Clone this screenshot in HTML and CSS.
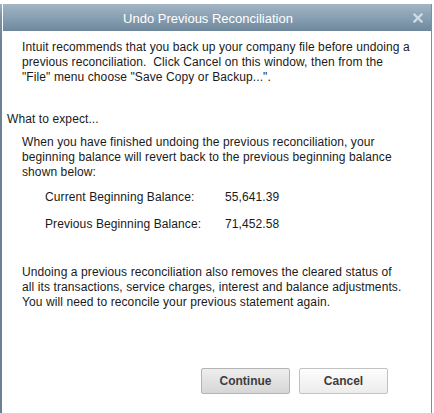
FILE: index.html
```html
<!DOCTYPE html>
<html lang="en">
<head>
  <meta charset="UTF-8" />
  <title>Undo Previous Reconciliation</title>
  <meta name="viewport" content="width=device-width, initial-scale=1.0">
  <link rel="stylesheet" href="styles.css">
</head>
<body>
  <div class="screen">
    <div class="backdrop"></div>
    <div class="dialog">
      <div class="titlebar">
        <span class="title">Undo Previous Reconciliation</span>
        <button class="close" title="Close">
          <svg width="10" height="10" viewBox="0 0 10 10">
            <path d="M1.5 1.5L8.5 8.5M8.5 1.5L1.5 8.5" stroke="currentColor" stroke-width="2.3" stroke-linecap="square" />
          </svg>
        </button>
      </div>

      <div class="content">
        <p class="note">
          Intuit recommends that you back up your company file before undoing a<br>
          previous reconciliation.&nbsp; Click Cancel on this window, then from the<br>
          "File" menu choose "Save Copy or Backup...".
        </p>

        <p class="heading">What to expect...</p>

        <p class="note explain">
          When you have finished undoing the previous reconciliation, your<br>
          beginning balance will revert back to the previous beginning balance<br>
          shown below:
        </p>

        <div class="balances">
          <div class="row">
            <span class="label">Current Beginning Balance:</span>
            <span class="value">55,641.39</span>
          </div>
          <div class="row">
            <span class="label">Previous Beginning Balance:</span>
            <span class="value">71,452.58</span>
          </div>
        </div>

        <p class="note warning">
          Undoing a previous reconciliation also removes the cleared status of<br>
          all its transactions, service charges, interest and balance adjustments.<br>
          You will need to reconcile your previous statement again.
        </p>

        <div class="actions">
          <button class="btn primary">Continue</button>
          <button class="btn">Cancel</button>
        </div>
      </div>
    </div>
  </div>
</body>
</html>
```

FILE: styles.css
```css
body {
  margin: 0;
  padding: 0;
  background-color: #ffffff;
  font-family: "Liberation Sans", Arial, sans-serif;
  font-size: 12px;
  color: #1a1a1a;
}

.screen {
  display: flex;
  height: 413px;
  overflow: hidden;
}

.backdrop {
  width: 2px;
  margin-top: 4px;
  background: linear-gradient(#9fb2c2 0, #7d93a6 12px, #6c8193 40px, #6c8193 100%);
}

.dialog {
  width: 428px;
  margin-top: 4px;
  margin-left: 1px;
  border-right: 1px solid #7890a4;
  display: flex;
  flex-direction: column;
  background-color: #ffffff;
}

.titlebar {
  height: 27px;
  display: flex;
  align-items: center;
  padding-right: 28px;
  background: linear-gradient(#a2b5c5, #88a0b3 50%, #6f889c);
  color: #ffffff;
}

.title {
  flex: 1;
  text-align: center;
  font-size: 13px;
  padding-top: 1px;
}

.close {
  border: none;
  background: none;
  padding: 0;
  margin-right: -20px;
  margin-top: 1px;
  width: 10px;
  height: 10px;
  color: #d3dbe2;
  display: flex;
  cursor: pointer;
}

.content {
  padding: 9px 0 0 0;
  display: flex;
  flex-direction: column;
  letter-spacing: 0.1px;
}

p {
  margin: 0;
  line-height: 15px;
  white-space: nowrap;
}

.note {
  padding-left: 19px;
}

.heading {
  margin-top: 27px;
  padding-left: 4px;
}

.explain {
  margin-top: 8px;
}

.balances {
  margin-top: 10px;
  padding-left: 42px;
  display: flex;
  flex-direction: column;
  gap: 12px;
}

.row {
  display: flex;
  line-height: 15px;
}

.label {
  width: 180px;
}

.warning {
  margin-top: 33px;
}

.actions {
  margin-top: 58px;
  display: flex;
  justify-content: flex-end;
  gap: 9px;
  padding-right: 43px;
}

.btn {
  width: 89px;
  height: 26px;
  border: 1px solid #c2c2c2;
  border-radius: 2px;
  background: linear-gradient(#fdfdfd, #ececec);
  font-family: "Liberation Sans", Arial, sans-serif;
  font-size: 12px;
  font-weight: bold;
  color: #3d3d3d;
  cursor: pointer;
}

.btn.primary {
  border-color: #b4b4b4;
  background: linear-gradient(#eeeeee, #d6d6d6);
}
```
